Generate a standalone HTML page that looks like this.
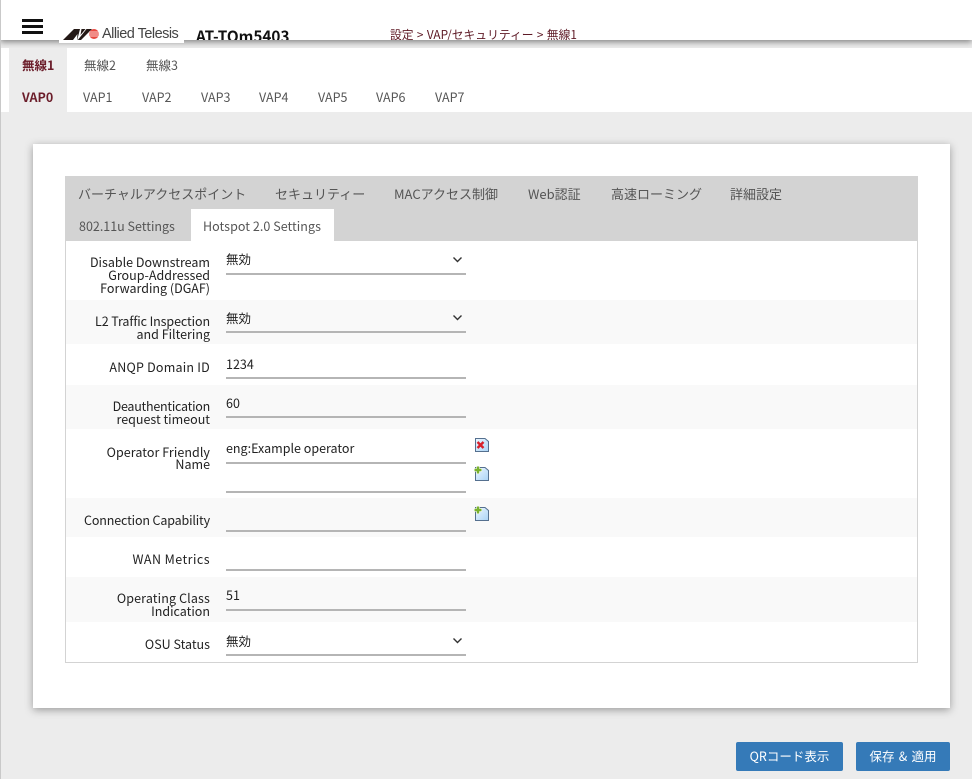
<!DOCTYPE html>
<html lang="ja"><head><meta charset="utf-8"><title>AT-TQm5403</title>
<style>
html,body{margin:0;padding:0}
body{width:972px;height:779px;overflow:hidden;background:#ececec;position:relative;font-family:"Noto Sans CJK JP","Liberation Sans",sans-serif;font-size:12.5px;color:#222}
div,span{position:absolute;white-space:nowrap}
em{font-style:normal}
.nav{color:#555;font-size:12.5px;line-height:16px}
.act{color:#6b1d2a;font-weight:700}
.tab{color:#555;font-size:13px;line-height:18px}
.l{right:762px;text-align:right;line-height:13px;font-size:12.5px;color:#222}
.u{left:226px;width:240px;height:2px;background:#b5b5b5}
.v{left:226px;line-height:16px;color:#222;font-size:12.5px}
.z{left:66px;width:851px;background:#f9f9f9}
</style></head><body>
<div style="left:0;top:0;width:972px;height:40px;background:#fff;box-shadow:0 2px 6px rgba(0,0,0,.45)"></div>
<div style="left:0;top:48px;width:972px;height:64px;background:#fff"></div>
<div style="left:0;top:0;width:1px;height:779px;background:#c9c9c9"></div>
<div style="left:9px;top:48px;width:58px;height:64px;background:#ececec"></div>
<div style="left:22px;top:25px;width:21px;height:3px;background:#111"></div><div style="left:22px;top:19px;width:21px;height:3px;background:#111"></div><div style="left:22px;top:31px;width:21px;height:3px;background:#111"></div>
<div style="left:59px;top:26px;width:125px;height:17px;background:#fff"></div>
<svg style="position:absolute;left:63px;top:28px" width="37" height="13" viewBox="0 0 37 13"><path d="M0 12 L11 1 H29 L18 12Z" fill="#231815"/><path d="M10 12 L14.500 6 L14 12Z M17 1 H18.500 L17.500 7 L22.500 1 H23.500 L14.800 12 H14.200Z" fill="#fff"/><circle cx="31" cy="6" r="5" fill="#e8473f"/><path d="M26 4h10M26 6h10M26 8h10" stroke="#fff" stroke-width=".7"/></svg>
<div style="left:102px;top:25px;font-family:'Liberation Sans',sans-serif;font-size:14.5px;line-height:18px;color:#444;letter-spacing:-.52px">Allied Telesis</div>
<div style="left:196px;top:26px;height:14px;overflow:hidden;font-size:15.3px;font-weight:700;line-height:20px;color:#111">AT-TQm5403</div>
<div style="left:390px;top:26px;height:14px;overflow:hidden;font-size:11.8px;line-height:17px;color:#5e1a26;word-spacing:.7px">設定 &gt; VAP/セキュリティー &gt; 無線1</div>
<div class="nav act" style="left:22px;top:57px">無線1</div><div class="nav" style="left:84px;top:57px">無線2</div><div class="nav" style="left:146px;top:57px">無線3</div>
<div class="nav act" style="left:22px;top:89px">VAP0</div>
<div class="nav" style="left:83px;top:89px">VAP1</div><div class="nav" style="left:142px;top:89px">VAP2</div><div class="nav" style="left:201px;top:89px">VAP3</div><div class="nav" style="left:259px;top:89px">VAP4</div><div class="nav" style="left:318px;top:89px">VAP5</div><div class="nav" style="left:376px;top:89px">VAP6</div><div class="nav" style="left:435px;top:89px">VAP7</div>
<div style="left:33px;top:144px;width:917px;height:564px;background:#fff;box-shadow:0 2px 8px rgba(0,0,0,.35)"></div>
<div style="left:65px;top:176px;width:851px;height:485px;background:#fff;border:1px solid #d3d3d3"></div>
<div style="left:65px;top:176px;width:853px;height:65px;background:#d3d3d3"></div>
<div style="left:191px;top:209px;width:143px;height:32px;background:#fff"></div>
<div class="tab" style="left:78px;top:185px">バーチャルアクセスポイント</div>
<div class="tab" style="left:275px;top:185px">セキュリティー</div>
<div class="tab" style="left:394px;top:185px">MACアクセス制御</div>
<div class="tab" style="left:528px;top:185px">Web認証</div>
<div class="tab" style="left:611px;top:185px">高速ローミング</div>
<div class="tab" style="left:730px;top:185px">詳細設定</div>
<div class="tab" style="left:79px;top:217px;font-size:12.5px">802.11u Settings</div>
<div class="tab" style="left:203px;top:217px;font-size:12.5px;letter-spacing:.05px">Hotspot 2.0 Settings</div>
<div class="z" style="top:300px;height:44px"></div>
<div class="z" style="top:385px;height:44px"></div>
<div class="z" style="top:498px;height:39px"></div>
<div class="z" style="top:577px;height:45px"></div>
<div class="l" style="top:255px">Disable Downstream<br>Group-Addressed<br>Forwarding (DGAF)</div>
<div class="l" style="top:314px"><em style="letter-spacing:-.1px">L2 Traffic Inspection</em><br>and Filtering</div>
<div class="l" style="top:360px"><em style="letter-spacing:.22px">ANQP Domain ID</em></div>
<div class="l" style="top:399px"><em style="letter-spacing:-.25px">Deauthentication</em><br>request timeout</div>
<div class="l" style="top:446px;line-height:12px"><em style="letter-spacing:.06px">Operator Friendly</em><br>Name</div>
<div class="l" style="top:513px"><em style="letter-spacing:-.15px">Connection Capability</em></div>
<div class="l" style="top:552px"><em style="letter-spacing:.45px">WAN Metrics</em></div>
<div class="l" style="top:591px"><em style="letter-spacing:.13px">Operating Class</em><br>Indication</div>
<div class="l" style="top:637px">OSU Status</div>
<div class="v" style="top:251px">無効</div><div class="u" style="top:273px"></div>
<div class="v" style="top:310px">無効</div><div class="u" style="top:331px"></div>
<div class="v" style="top:356px">1234</div><div class="u" style="top:377px"></div>
<div class="v" style="top:395px">60</div><div class="u" style="top:416px"></div>
<div class="v" style="top:440px">eng:Example operator</div><div class="u" style="top:462px"></div><div class="u" style="top:491px"></div>
<div class="u" style="top:530px"></div><div class="u" style="top:569px"></div>
<div class="v" style="top:587px">51</div><div class="u" style="top:609px"></div>
<div class="v" style="top:633px">無効</div><div class="u" style="top:654px"></div>
<svg style="position:absolute;left:452px;top:256px" width="11" height="8"><path d="M1.5 1.5L5.5 5.5L9.5 1.5" fill="none" stroke="#333" stroke-width="1.4"/></svg>
<svg style="position:absolute;left:452px;top:314px" width="11" height="8"><path d="M1.5 1.5L5.5 5.5L9.5 1.5" fill="none" stroke="#333" stroke-width="1.4"/></svg>
<svg style="position:absolute;left:452px;top:637px" width="11" height="8"><path d="M1.5 1.5L5.5 5.5L9.5 1.5" fill="none" stroke="#333" stroke-width="1.4"/></svg>
<svg style="position:absolute;left:475px;top:437px" width="15" height="16" viewBox="0 0 15 16"><defs><linearGradient id="g" x1="0" y1="0" x2="1" y2="1"><stop offset="0" stop-color="#eef7ff"/><stop offset="1" stop-color="#a9d3f6"/></linearGradient></defs><path d="M.5 1.500H10L13.500 4.500V14.500H.5Z" fill="url(#g)" stroke="#55708f"/><path d="M2.500 5L8.500 11M8.500 5L2.500 11" stroke="#d8202a" stroke-width="2.400"/></svg>
<svg style="position:absolute;left:474px;top:465px" width="16" height="17" viewBox="0 0 16 17"><path d="M1.500 2.500H11L14.500 5.500V15.500H1.500Z" fill="url(#g)" stroke="#55708f"/><path d="M0 5H8M4 1V9" stroke="#fff" stroke-width="3.500"/><path d="M.5 5H7.500M4 1.500V8.500" stroke="#7ab22e" stroke-width="2.400"/></svg>
<svg style="position:absolute;left:474px;top:505px" width="16" height="17" viewBox="0 0 16 17"><path d="M1.500 2.500H11L14.500 5.500V15.500H1.500Z" fill="url(#g)" stroke="#55708f"/><path d="M0 5H8M4 1V9" stroke="#fff" stroke-width="3.500"/><path d="M.5 5H7.500M4 1.500V8.500" stroke="#7ab22e" stroke-width="2.400"/></svg>
<div style="left:736px;top:742px;width:107px;height:29px;background:#357ab8;border-radius:2px;color:#fff;text-align:center;line-height:28px;font-size:12.5px">QRコード表示</div>
<div style="left:856px;top:742px;width:94px;height:29px;background:#357ab8;border-radius:2px;color:#fff;text-align:center;line-height:28px;font-size:12.5px;word-spacing:1.500px">保存 &amp; 適用</div>
</body></html>
